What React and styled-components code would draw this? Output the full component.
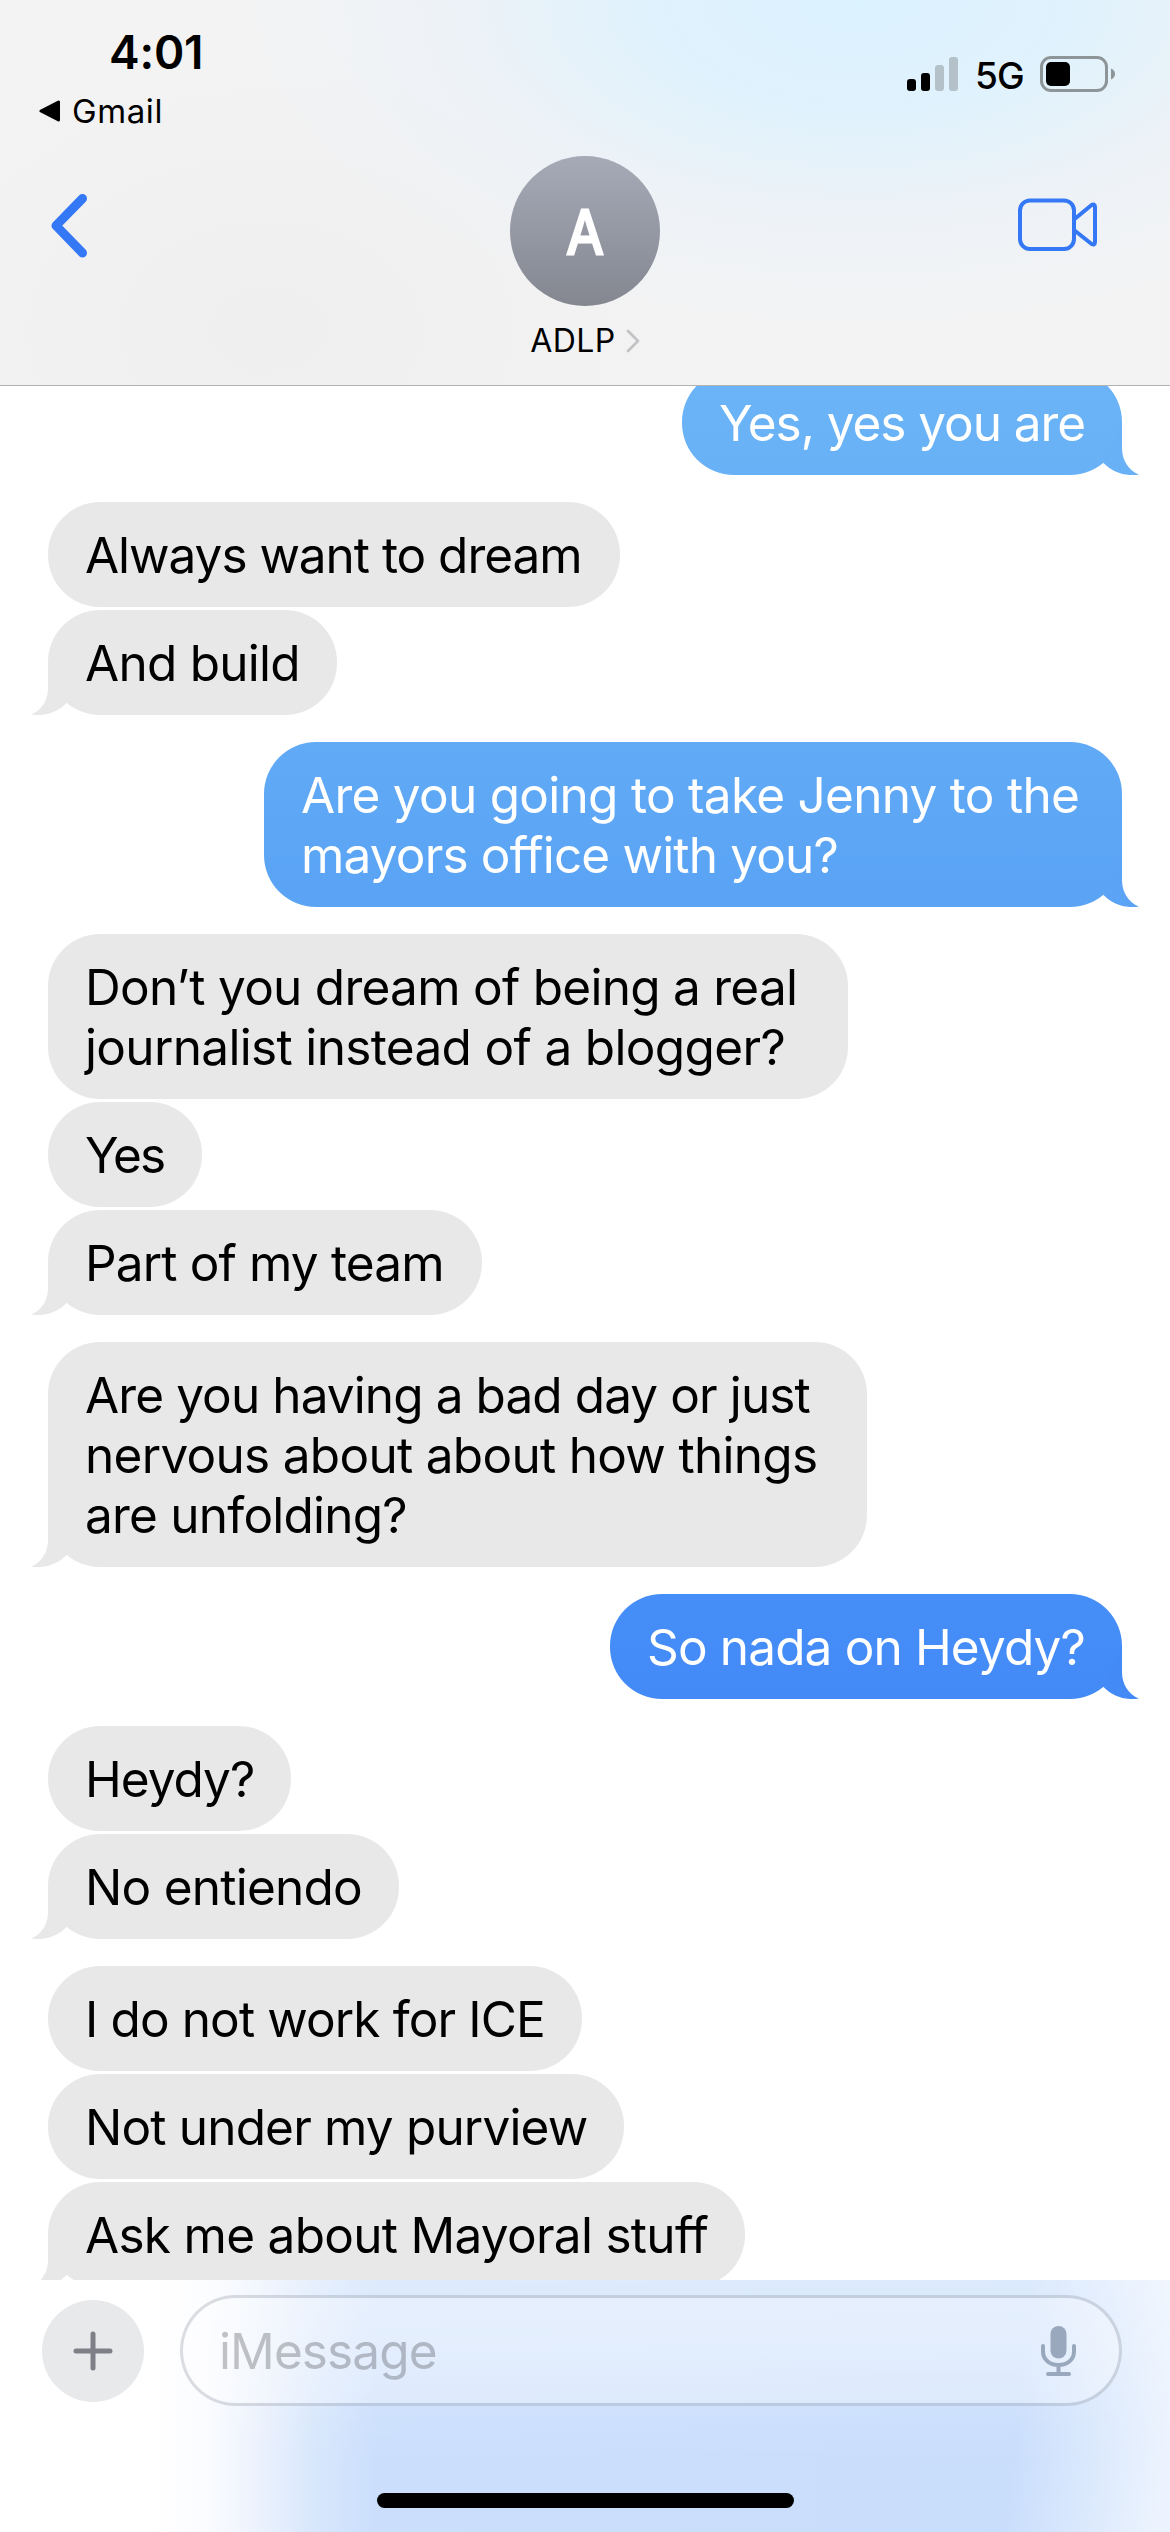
import React from 'react'
import styled, { createGlobalStyle } from 'styled-components'

const GlobalStyle = createGlobalStyle`
    * {
        box-sizing: border-box;
    }

    body {
        margin: 0;
        background: #fff;
        font-family: Inter, "Liberation Sans", sans-serif;
        color: #000;
    }

    svg {
        display: block;
    }
`

const Phone = styled.div`
    width: 1170px;
    height: 2532px;
    display: flex;
    flex-direction: column;
    overflow: hidden;
    background: #fff;
`

const Header = styled.header`
    height: 386px;
    flex-shrink: 0;
    border-bottom: 1px solid #b2b2b3;
    background:
        radial-gradient(ellipse 620px 330px at 860px 0, #dbf2ff 0%, rgba(221, 242, 254, 0.85) 35%, rgba(230, 241, 250, 0.4) 68%, rgba(240, 243, 246, 0) 100%),
        radial-gradient(ellipse 420px 300px at 270px 330px, #efefef 0%, rgba(240, 240, 240, 0) 100%),
        #f3f3f4;
`

const StatusBar = styled.div`
    height: 156px;
    display: flex;
    justify-content: space-between;
    padding: 0 55px 0 39px;
`

const StatusLeft = styled.div`
    display: flex;
    flex-direction: column;
    align-items: flex-start;
`

const Time = styled.div`
    padding: 24px 0 0 70px;
    font-size: 46px;
    line-height: 56px;
    font-weight: 600;
    letter-spacing: -0.2px;
`

const BackToApp = styled.div`
    display: flex;
    align-items: center;
    gap: 11px;
    margin-top: 11px;
    font-size: 33px;
    line-height: 40px;
    letter-spacing: 0.6px;
`

const StatusRight = styled.div`
    height: 36px;
    margin-top: 56px;
    display: flex;
    align-items: center;
    gap: 17px;
`

const Network = styled.div`
    width: 48px;
    padding-top: 3px;
    font-size: 37px;
    line-height: 40px;
    font-weight: 450;
    letter-spacing: -0.8px;
    white-space: nowrap;
`

const NavBar = styled.nav`
    height: 229px;
    display: flex;
    justify-content: space-between;
    align-items: flex-start;
    padding: 0 72px 0 48px;
`

const NavSide = styled.div`
    width: 84px;
    display: flex;
    justify-content: ${({ $end }) => ($end ? 'flex-end' : 'flex-start')};
    padding-top: 36px;
`

const Contact = styled.div`
    display: flex;
    flex-direction: column;
    align-items: center;
    margin-left: 24px;
`

const Avatar = styled.div`
    width: 150px;
    height: 150px;
    display: flex;
    align-items: center;
    justify-content: center;
    border-radius: 50%;
    background: linear-gradient(#a6aab7, #848790);
    color: #fff;
    font-size: 61px;
    line-height: 1;
    font-weight: 400;
    padding-top: 3px;
    -webkit-text-stroke: 3px #fff;
    stroke-linejoin: round;
`

const Initial = styled.span`
    transform: scaleX(0.88);
`

const ContactName = styled.div`
    display: flex;
    align-items: center;
    gap: 10px;
    margin-top: 15px;
    font-size: 32px;
    line-height: 40px;
    letter-spacing: 0.4px;
`

const Thread = styled.main`
    flex: 1;
    min-height: 0;
    overflow: hidden;
    padding: 0 48px;
`

const Messages = styled.div`
    display: flex;
    flex-direction: column;
    gap: 27px;
    margin-top: -16px;
`

const Group = styled.div`
    display: flex;
    flex-direction: column;
    align-items: ${({ $sent }) => ($sent ? 'flex-end' : 'flex-start')};
    gap: 3px;
`

const Bubble = styled.div`
    position: relative;
    width: ${({ $width }) => $width}px;
    padding: 23px 0 22px 37px;
    border-radius: 52px;
    background: ${({ $from, $to }) => `linear-gradient(${$from}, ${$to})`};
    color: ${({ $sent }) => ($sent ? '#fff' : '#000')};
`

const Line = styled.div`
    font-size: 49.5px;
    line-height: 60px;
    letter-spacing: ${({ $track }) => $track}px;
    white-space: nowrap;
`

const Tail = styled.svg`
    position: absolute;
    bottom: 0;
    ${({ $sent }) => ($sent ? 'right: -17px; transform: scaleX(-1);' : 'left: -17px;')}
`

const Composer = styled.footer`
    height: 252px;
    flex-shrink: 0;
    display: flex;
    flex-direction: column;
    align-items: center;
    justify-content: space-between;
    padding: 15px 48px 24px 42px;
    background:
        linear-gradient(rgba(255, 255, 255, 0.36) 0%, rgba(255, 255, 255, 0.28) 20%, rgba(255, 255, 255, 0.04) 58%, rgba(255, 255, 255, 0) 75%),
        linear-gradient(97deg, rgba(255, 255, 255, 0) 86%, rgba(255, 255, 255, 0.65) 99%),
        linear-gradient(90deg, #fff 150px, #fbfcff 205px, #edf3fd 255px, #d8e7fc 315px, #cbdffc 375px, #c9defc 100%);
`

const InputRow = styled.div`
    width: 100%;
    display: flex;
    align-items: center;
    justify-content: space-between;
`

const AddButton = styled.button`
    width: 102px;
    height: 102px;
    display: flex;
    align-items: center;
    justify-content: center;
    margin-top: 1px;
    padding: 0;
    border: none;
    border-radius: 50%;
    background: #e8e9eb;
`

const Field = styled.div`
    width: 942px;
    height: 111px;
    display: flex;
    align-items: center;
    justify-content: space-between;
    padding: 0 43px 0 36px;
    border: 3px solid rgba(140, 145, 155, 0.3);
    border-radius: 56px;
    background: rgba(255, 255, 255, 0.3);
    background-clip: padding-box;
`

const Placeholder = styled.span`
    font-size: 49.5px;
    line-height: 60px;
    letter-spacing: -0.9px;
    color: rgba(60, 60, 67, 0.3);
`

const HomeIndicator = styled.div`
    width: 417px;
    height: 15px;
    margin-left: 6px;
    border-radius: 8px;
    background: #000;
`

const GREY = ['#e8e8e8', '#e8e8e8']

// each line is [text, letter-spacing]
const thread = [
  {
    sent: true,
    items: [{ lines: [['Yes, yes you are', -1.05]], width: 440, colors: ['#6bb4f7', '#68b1f6'] }],
  },
  {
    items: [
      { lines: [['Always want to dream', -1.03]], width: 572 },
      { lines: [['And build', -0.75]], width: 289 },
    ],
  },
  {
    sent: true,
    items: [
      {
        lines: [
          ['Are you going to take Jenny to the', -0.72],
          ['mayors office with you?', -0.83],
        ],
        width: 858,
        colors: ['#60aaf6', '#5aa3f5'],
      },
    ],
  },
  {
    items: [
      {
        lines: [
          ['Don’t you dream of being a real', -0.73],
          ['journalist instead of a blogger?', -0.66],
        ],
        width: 800,
      },
      { lines: [['Yes', -1.8]], width: 154 },
      { lines: [['Part of my team', -0.85]], width: 434 },
    ],
  },
  {
    items: [
      {
        lines: [
          ['Are you having a bad day or just', -0.9],
          ['nervous about about how things', -0.7],
          ['are unfolding?', -0.77],
        ],
        width: 819,
      },
    ],
  },
  {
    sent: true,
    items: [{ lines: [['So nada on Heydy?', -0.85]], width: 512, colors: ['#468ef7', '#438af7'] }],
  },
  {
    items: [
      { lines: [['Heydy?', -1]], width: 243 },
      { lines: [['No entiendo', -0.75]], width: 351 },
    ],
  },
  {
    items: [
      { lines: [['I do not work for ICE', -0.88]], width: 534 },
      { lines: [['Not under my purview', -0.83]], width: 576 },
      { lines: [['Ask me about Mayoral stuff', -0.71]], width: 697 },
    ],
  },
]

const Signal = () => (
  <svg width="51" height="34" viewBox="0 0 51 34">
    <rect x="0" y="22" width="9" height="12" rx="3" />
    <rect x="14" y="16" width="9" height="18" rx="3" />
    <rect x="28" y="8" width="9" height="26" rx="3" fill="#b4c1c9" />
    <rect x="42" y="0" width="9" height="34" rx="3" fill="#b4c1c9" />
  </svg>
)

const Battery = () => (
  <svg width="75" height="36" viewBox="0 0 75 36">
    <rect x="1.5" y="1.5" width="65" height="33" rx="9.5" fill="none" stroke="#8e9599" strokeWidth="3" />
    <rect x="6" y="6" width="24" height="24" rx="5" />
    <path d="M71 12.5c2.6 1 4 3.2 4 5.5s-1.4 4.5-4 5.5z" fill="#8e9599" />
  </svg>
)

const BackIcon = () => (
  <svg width="42" height="68" viewBox="0 0 42 68">
    <path d="M34.5 6.500L8 33.700l26.500 27.300" fill="none" stroke="#3478f6" strokeWidth="9" strokeLinecap="round" strokeLinejoin="round" />
  </svg>
)

const VideoIcon = () => (
  <svg width="80" height="62" viewBox="0 0 80 62" fill="none" stroke="#3478f6" strokeWidth="4" strokeLinejoin="round">
    <rect x="2" y="8.5" width="54" height="48.5" rx="10" />
    <path d="M56 27.500L73 13.500Q77 11 77 15V50Q77 54 73 51.500L56 38" />
  </svg>
)

const MicIcon = () => (
  <svg width="35" height="50" viewBox="0 0 35 50" fill="none" stroke="#9aa8be" strokeWidth="4" strokeLinecap="round">
    <rect x="9.5" y="0" width="16" height="32.5" rx="8" fill="#9aa8be" stroke="none" />
    <path d="M2 20v5.500C2 33.500 8.500 39 17.500 39S33 33.500 33 25.500V20M17.500 40v7M7 48h21" />
  </svg>
)

const Message = ({ lines, width, colors = GREY, sent, last }) => (
  <Bubble $sent={sent} $width={width} $from={colors[0]} $to={colors[1]}>
    {lines.map(([text, track]) => (
      <Line key={text} $track={track}>{text}</Line>
    ))}
    {last && (
      <Tail $sent={sent} width="37" height="54" viewBox="0 0 37 54" fill={colors[1]}>
        <path d="M17 0V27C17 39 11 49 0 53.600C13 55.500 26 52 36 41.500L25 20Z" />
      </Tail>
    )}
  </Bubble>
)

export default function App() {
  return (
    <Phone>
      <GlobalStyle />
      <Header>
        <StatusBar>
          <StatusLeft>
            <Time>4:01</Time>
            <BackToApp>
              <svg width="22" height="22" viewBox="0 0 22 22">
                <path d="M2 11L19.500 2V20Z" stroke="#000" strokeWidth="3" strokeLinejoin="round" />
              </svg>
              Gmail
            </BackToApp>
          </StatusLeft>
          <StatusRight>
            <Signal />
            <Network>5G</Network>
            <Battery />
          </StatusRight>
        </StatusBar>
        <NavBar>
          <NavSide>
            <BackIcon />
          </NavSide>
          <Contact>
            <Avatar>
              <Initial>A</Initial>
            </Avatar>
            <ContactName>
              ADLP
              <svg width="14" height="24" viewBox="0 0 14 24">
                <path d="M2 2l10 10L2 22" fill="none" stroke="#c3c3c6" strokeWidth="2.8" strokeLinecap="round" strokeLinejoin="round" />
              </svg>
            </ContactName>
          </Contact>
          <NavSide $end>
            <VideoIcon />
          </NavSide>
        </NavBar>
      </Header>
      <Thread>
        <Messages>
          {thread.map((group, i) => (
            <Group key={i} $sent={group.sent}>
              {group.items.map((item, j) => (
                <Message key={j} {...item} sent={group.sent} last={j === group.items.length - 1} />
              ))}
            </Group>
          ))}
        </Messages>
      </Thread>
      <Composer>
        <InputRow>
          <AddButton>
            <svg width="40" height="40" viewBox="0 0 40 40">
              <path d="M20 3v34M3 20h34" stroke="#7f8087" strokeWidth="5" strokeLinecap="round" />
            </svg>
          </AddButton>
          <Field>
            <Placeholder>iMessage</Placeholder>
            <MicIcon />
          </Field>
        </InputRow>
        <HomeIndicator />
      </Composer>
    </Phone>
  )
}
